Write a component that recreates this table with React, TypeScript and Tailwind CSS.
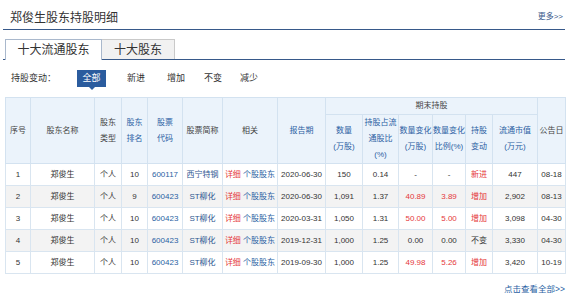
import React from "react";

const FONT = '"Liberation Sans", "Noto Sans CJK SC", Arial, sans-serif';

const cols = [25, 64, 27, 26, 35, 40, 55, 48, 37, 36, 34, 33, 27, 45, 28];

type Row = {
  n: string;
  rank: string;
  code: string;
  name: string;
  date: string;
  qty: string;
  pct: string;
  chg: string;
  chgPct: string;
  act: string;
  mv: string;
  ann: string;
};

const rows: Row[] = [
  { n: "1", rank: "10", code: "600117", name: "西宁特钢", date: "2020-06-30", qty: "150", pct: "0.14", chg: "-", chgPct: "-", act: "新进", mv: "447", ann: "08-18" },
  { n: "2", rank: "9", code: "600423", name: "ST柳化", date: "2020-06-30", qty: "1,091", pct: "1.37", chg: "40.89", chgPct: "3.89", act: "增加", mv: "2,902", ann: "08-13" },
  { n: "3", rank: "10", code: "600423", name: "ST柳化", date: "2020-03-31", qty: "1,050", pct: "1.31", chg: "50.00", chgPct: "5.00", act: "增加", mv: "3,098", ann: "04-30" },
  { n: "4", rank: "10", code: "600423", name: "ST柳化", date: "2019-12-31", qty: "1,000", pct: "1.25", chg: "0.00", chgPct: "0.00", act: "不变", mv: "3,330", ann: "04-30" },
  { n: "5", rank: "10", code: "600423", name: "ST柳化", date: "2019-09-30", qty: "1,000", pct: "1.25", chg: "49.98", chgPct: "5.26", act: "增加", mv: "3,420", ann: "10-19" },
];

function Th({
  children,
  rowSpan,
  colSpan,
  blue,
}: {
  children: React.ReactNode;
  rowSpan?: number;
  colSpan?: number;
  blue?: boolean;
}) {
  return (
    <th
      rowSpan={rowSpan}
      colSpan={colSpan}
      className={`border border-[#d3e2f0] bg-[#ebf3fb] p-0 text-center align-middle font-normal text-[8px] leading-[16px] whitespace-nowrap ${
        blue ? "text-[#2b5fa3]" : "text-[#444]"
      }`}
    >
      {children}
    </th>
  );
}

function Td({ children, className = "" }: { children: React.ReactNode; className?: string }) {
  return (
    <td className={`border border-[#d9e5f0] p-0 h-[22px] text-center align-middle text-[8px] leading-[10px] whitespace-nowrap ${className}`}>
      {children}
    </td>
  );
}

export default function App() {
  return (
    <div className="w-[572px] h-[293px] bg-white overflow-hidden text-[#333]" style={{ fontFamily: FONT }}>
      {/* Title */}
      <div className="ml-[3px] mr-[7px] h-[30px] flex items-center justify-between border-b-[1.5px] border-[#37598a] pl-[7px] pr-[2px]">
        <span className="text-[12px] leading-none text-[#333] pt-[6px]">郑俊生股东持股明细</span>
        <span className="text-[8px] leading-none text-[#3a5a8c] pt-[5px]">更多&gt;&gt;</span>
      </div>

      {/* Tabs */}
      <div className="ml-[3px] mr-[7px] mt-[9px] flex h-[21px] border-b-[1.5px] border-[#37598a] pl-[2px]">
        <div className="w-[97px] h-[21px] -mb-[1.5px] flex items-center justify-center border border-b-0 border-[#a9b8cc] bg-white text-[12px] leading-none text-[#333]">
          十大流通股东
        </div>
        <div className="w-[73px] h-[20px] flex items-center justify-center border border-l-0 border-b-0 border-[#c9c9c9] bg-[#f1f1f1] text-[12px] leading-none text-[#333]">
          十大股东
        </div>
      </div>

      {/* Filter */}
      <div className="mt-[10px] h-[17px] flex items-center pl-[11px] text-[9px] leading-none text-[#333]">
        <span className="w-[66px]">持股变动：</span>
        <div className="relative w-[29px] h-[17px] bg-[#2b5c9e] text-white flex items-center justify-center">
          全部
          <span className="absolute left-1/2 -translate-x-1/2 top-[17px] w-0 h-0 border-l-[3px] border-r-[3px] border-t-[3px] border-l-transparent border-r-transparent border-t-[#2b5c9e]" />
        </div>
        <span className="w-[42px] text-right pr-[3px]">新进</span>
        <span className="w-[38px] text-right pr-[1px]">增加</span>
        <span className="w-[36px] text-right">不变</span>
        <span className="w-[38px] text-right pr-[2px]">减少</span>
      </div>

      {/* Table */}
      <div className="mt-[10px] ml-[5px]">
        <table className="table-fixed border-collapse w-[560px]">
          <colgroup>
            {cols.map((w, i) => (
              <col key={i} style={{ width: w }} />
            ))}
          </colgroup>
          <thead>
            <tr className="h-[16px]">
              <Th rowSpan={2}>序号</Th>
              <Th rowSpan={2}>股东名称</Th>
              <Th rowSpan={2}>
                股东<br />类型
              </Th>
              <Th rowSpan={2} blue>
                股东<br />排名
              </Th>
              <Th rowSpan={2} blue>
                股票<br />代码
              </Th>
              <Th rowSpan={2}>股票简称</Th>
              <Th rowSpan={2}>相关</Th>
              <Th rowSpan={2} blue>报告期</Th>
              <Th colSpan={6}>期末持股</Th>
              <Th rowSpan={2}>公告日</Th>
            </tr>
            <tr className="h-[46px]">
              <Th blue>
                数量<br />(万股)
              </Th>
              <Th blue>
                持股占流<br />通股比<br />(%)
              </Th>
              <Th blue>
                数量变化<br />(万股)
              </Th>
              <Th blue>
                数量变化<br />比例(%)
              </Th>
              <Th blue>
                持股<br />变动
              </Th>
              <Th blue>
                流通市值<br />(万元)
              </Th>
            </tr>
          </thead>
          <tbody>
            {rows.map((r, i) => {
              const up = r.act === "增加" || r.act === "新进";
              const chgRed = r.act === "增加";
              return (
                <tr key={r.n} className={i % 2 === 1 ? "bg-[#f3f3f3]" : "bg-white"}>
                  <Td>{r.n}</Td>
                  <Td>郑俊生</Td>
                  <Td>个人</Td>
                  <Td>{r.rank}</Td>
                  <Td className="text-[#2b5fa3]">{r.code}</Td>
                  <Td className="text-[#2e5791]">{r.name}</Td>
                  <Td>
                    <span className="text-[#e5383b]">详细</span>{" "}
                    <span className="text-[#2b5fa3]">个股股东</span>
                  </Td>
                  <Td>{r.date}</Td>
                  <Td>{r.qty}</Td>
                  <Td>{r.pct}</Td>
                  <Td className={chgRed ? "text-[#e5383b]" : ""}>{r.chg}</Td>
                  <Td className={chgRed ? "text-[#e5383b]" : ""}>{r.chgPct}</Td>
                  <Td className={up ? "text-[#e5383b]" : ""}>{r.act}</Td>
                  <Td>{r.mv}</Td>
                  <Td>{r.ann}</Td>
                </tr>
              );
            })}
          </tbody>
        </table>
      </div>

      <div className="mr-[7px] mt-[10px] h-[10px] text-right text-[8.5px] leading-[10px] text-[#2b5fa3]">
        点击查看全部&gt;&gt;
      </div>
    </div>
  );
}
